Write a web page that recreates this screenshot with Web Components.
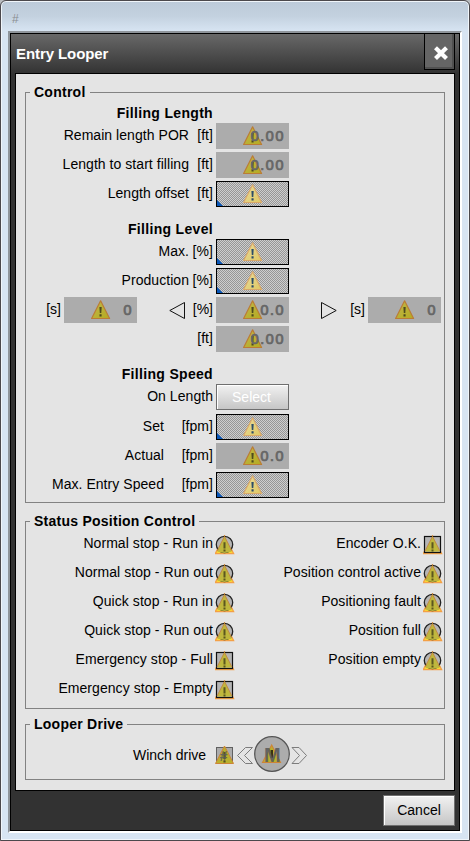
<!DOCTYPE html>
<html lang="en">
<head>
<meta charset="utf-8">
<title>Entry Looper</title>
<style>
html,body{margin:0;padding:0}
body{width:470px;height:841px;overflow:hidden;background:#b9bcc0;font:14px/20px "Liberation Sans",Arial,sans-serif;color:#000}
</style>
</head>
<body>
<looper-window></looper-window>
<script>
const define = (name, html) => customElements.define(name, class extends HTMLElement {
  constructor() {
    super();
    this.attachShadow({mode: 'open'});
  }
  connectedCallback() {
    this.shadowRoot.innerHTML = typeof html === 'function' ? html(this) : html;
  }
});

/* Triangular warning sign; tone = solid | pale */
define('warn-sign', el => {
  const pale = el.getAttribute('tone') === 'pale';
  return `<style>:host{display:block;width:20px;height:20px}svg{display:block}</style>
  <svg width="20" height="20" viewBox="0 0 20 20">
    <defs><linearGradient id="g" x1="0" y1="0" x2="1" y2="1">
      <stop offset="0" stop-color="${pale ? '#e8dca0' : '#c0b84c'}"/><stop offset="1" stop-color="${pale ? '#dfc862' : '#b5aa20'}"/></linearGradient></defs>
    <path d="M9.6 .8 18.6 18.5H.6Z" fill="url(#g)" stroke="${pale ? '#d9a869' : '#bb7c35'}" stroke-width="1.2" stroke-linejoin="round"/>
    <path d="M8.4 7h2.3l-.4 6.1H8.8ZM8.5 14.3h2.1v2.2H8.5Z" fill="${pale ? '#2c4d68' : '#4d4a1e'}"/>
  </svg>`;
});

/* Value box: read-only (flat grey) or editable (hatched, blue corner) */
define('value-field', el => {
  const edit = el.hasAttribute('editable');
  return `<style>
  :host{display:flex;flex:none;position:relative;box-sizing:border-box;width:73px;height:26px;align-items:center;justify-content:flex-end;padding:0 4.4px 1px 0;
    background:#acacac;color:#666;border:0;font:14px/24px "DejaVu Sans",sans-serif;letter-spacing:.8px;-webkit-text-stroke:.7px #666}
  :host([editable]){border:1px solid #000;background:conic-gradient(#cecece 25%,#969696 0 50%,#cecece 0 75%,#969696 0) 0 0/2px 2px}
  warn-sign{position:absolute;left:27px;top:3px}
  :host([editable]) warn-sign{left:26px;top:2px}
  .v{position:relative}
  .c{position:absolute;left:0;bottom:0;width:6px;height:6px;background:#0a57b8;clip-path:polygon(0 0,100% 100%,0 100%)}
  </style><warn-sign tone="${edit ? 'pale' : 'solid'}"></warn-sign>
  ${edit ? '<span class="c"></span>' : '<span class="v"><slot></slot></span>'}`;
});

/* One line of a form: label, unit and a value control */
define('form-row', el => `<style>
  :host{display:flex;height:26px;margin-bottom:3px;gap:3px}
  .l{width:187px;display:flex;justify-content:flex-end;line-height:24px;white-space:pre;letter-spacing:.05px}
  .u{text-align:right;width:${el.getAttribute('uw') || 24}px}
  </style><div class="l"><span>${el.getAttribute('label') || ''}</span>${el.hasAttribute('unit') ? `<span class="u">${el.getAttribute('unit')}</span>` : ''}</div><slot></slot>`);

define('form-heading', `<style>:host{display:block;height:20px;padding-top:9px;width:187px;text-align:right;font-weight:bold;letter-spacing:.32px;line-height:20px}</style><slot></slot>`);

/* Arrow outline, dir = left | right */
define('step-arrow', el => `<style>:host{display:block;width:16px;height:26px}svg{display:block}</style>
  <svg width="16" height="26" viewBox="0 0 16 26"><path d="${el.getAttribute('dir') === 'left' ? 'M15.5 5.5V21.5L.8 13.5Z' : 'M.5 5.5V21.5L15.2 13.5Z'}" fill="none" stroke="#111" stroke-width="1"/></svg>`);

define('level-row', `<style>
  :host{display:flex;height:26px;margin-bottom:3px;line-height:24px}
  span{text-align:right;margin-right:3px;flex:none}
  .a{width:35px}.b{width:28px}
  step-arrow{margin-left:32px}
  </style><span class="a">[s]</span><value-field>0</value-field><step-arrow dir="left"></step-arrow><span class="b">[%]</span><value-field>0.0</value-field><step-arrow dir="right"></step-arrow><span class="b">[s]</span><value-field>0</value-field>`);

/* Lamp with a warning overlay, shape = round | square */
define('status-lamp', el => {
  const sq = el.getAttribute('shape') === 'square';
  return `<style>:host{display:block;width:20px;height:20px}svg{display:block}</style>
  <svg width="20" height="20" viewBox="0 0 20 20">
    <path d="M9.5 .8 18.6 18.5H.4Z" fill="#ffe92c" stroke="#f3a047" stroke-width="1.3"/>
    ${sq ? '<rect x="1.5" y="1.5" width="16" height="16" fill="#b5b5b5" stroke="#111" stroke-width="1.2"/>' : '<circle cx="9.5" cy="9.5" r="8.2" fill="#b5b5b5" stroke="#222" stroke-width="1.3"/>'}
    <path d="M9.5 1.6 16.8 16.6 Q9.5 ${sq ? 16.8 : 19.2} 2.2 16.6Z" fill="#bfb73d"/>
    <path d="M2.1 16 9.5 1.4 16.9 16" fill="none" stroke="#c58a3c" stroke-width="1"/>
    <path d="M8.5 7.2h2v6.3h-2ZM8.5 14.4h2v2h-2Z" fill="#5b561f"/>
  </svg>`;
});

define('status-row', el => `<style>
  :host{display:flex;justify-content:flex-end;height:20px;margin-bottom:9px;gap:2px;line-height:16px}
  span{white-space:pre;letter-spacing:.06px}
  </style><span><slot></slot></span><status-lamp shape="${el.getAttribute('shape') || 'round'}"></status-lamp>`);

define('group-box', el => `<style>
  :host{display:block;position:relative;box-sizing:border-box;border:1px solid #828282}
  .t{position:absolute;left:4px;top:-11px;padding:0 4px 0 4px;background:#e4e4e4;font-weight:bold;letter-spacing:.25px;white-space:pre;line-height:20px}
  </style><span class="t">${el.getAttribute('caption')}</span><slot></slot>`);

define('push-button', `<style>
  :host{display:block;box-sizing:border-box;text-align:center;background:linear-gradient(#f1f1f1,#c6c6c6);border:1px solid #6f6f6f;box-shadow:inset 1px 1px #fff}
  </style><slot></slot>`);

define('winch-drive', `<style>
  :host{display:flex;align-items:flex-start;height:40px;padding:10px 0 0 107px}
  .l{width:82px;line-height:40px;white-space:pre}
  svg{display:block}
  text{font-family:"Liberation Sans",Arial,sans-serif;font-weight:bold}
  </style><span class="l">Winch drive</span>
  <svg width="92" height="38" viewBox="215 735 92 38">
    <rect x="216.5" y="747.5" width="16" height="16" fill="#acacac" stroke="#606060"/>
    <path d="M224.5 746 233.5 763.5H215.5Z" fill="#b9b02e" stroke="#ce8436" stroke-width="1"/>
    <path d="M223.4 752h2.2v7h-2.2ZM223.4 760.4h2.2v2h-2.2Z" fill="#58521c"/>
    <text x="219.6" y="760.5" font-size="14" font-style="italic" fill="#5c5c5c" opacity=".85">#</text>
    <g fill="none" stroke="#7c7c7c" stroke-width="1"><path d="M245.5 747.5 237.5 755.5 245.5 763.5H252.5L244.5 755.5 252.5 747.5Z"/><path d="M299 747.5 306.5 755.5 299 763.5H292L299.5 755.5 292 747.5Z"/></g>
    <circle cx="272" cy="754" r="17.3" fill="#acacac" stroke="#555" stroke-width="1.3"/>
    <path d="M271.7 745 280.5 762.5H262.5Z" fill="#b9b02e" stroke="#ce8436" stroke-width="1.1"/>
    <path d="M270.6 750h2.4v8h-2.4Z" fill="#373214"/>
    <text x="272.4" y="761.5" font-size="20" text-anchor="middle" fill="#5c5c5c" opacity=".9">M</text>
  </svg>`);

define('title-bar', `<style>
  :host{display:flex;justify-content:space-between;height:39px;box-sizing:border-box;padding-left:5px;padding-right:4px;color:#fff;font:bold 15px/39px "Liberation Sans",Arial,sans-serif;letter-spacing:-.08px}
  .x{box-sizing:border-box;width:31px;height:36px;border:1px solid #000;border-top:0;background:#656565;box-shadow:inset -2px -2px #505050}
  svg{display:block}
  </style><span><slot></slot></span><div class="x"><svg width="29" height="35" viewBox="425 34 29 35"><path d="M435.5 47.7 446.5 58.5M446.5 47.7 435.5 58.5" stroke="#fff" stroke-width="4.2"/></svg></div>`);

define('looper-window', `<style>
  :host{display:block;box-sizing:border-box;width:470px;height:841px;border:1px solid #4b484c;border-radius:6px 6px 0 0;
    background:linear-gradient(#bccad9,#c3d1df 15px,#d7e4f2 30px);box-shadow:inset 0 0 0 1px #f0f5fa;padding:0 7px 8px}
  .cap{height:30px;box-sizing:border-box;padding:8px 0 0 4px;font-size:12px;line-height:20px;color:#8b8e92}
  .frame{box-sizing:border-box;width:454px;height:802px;border:2px solid #8f959b;border-right-color:#fff;border-bottom-color:#fff}
  .dlg{box-sizing:border-box;height:798px;border:1px solid #000;background:linear-gradient(#686868,#323232 40px,#323232)}
  .page{box-sizing:border-box;margin:0 4px;height:718px;border:1px solid #000;background:#e4e4e4;padding:18px 9px 0}
  .foot{display:flex;justify-content:flex-end;padding:4px 4px 0 0}
  .foot push-button{width:72px;height:31px;line-height:29px}
  group-box.c{height:411px}
  group-box.s{height:188px;margin-top:18px}
  group-box.d{height:56px;margin-top:15px}
  .cols{display:flex;padding:13px 0 0 1px}
  .cols div{width:208px}
  form-row push-button{width:73px;height:26px;line-height:25px;color:#fff;padding-right:2px}
  </style>
  <div class="cap">#</div>
  <div class="frame"><div class="dlg">
    <title-bar>Entry Looper</title-bar>
    <div class="page">
      <group-box class="c" caption="Control">
        <form-heading style="padding-top:10px">Filling Length</form-heading>
        <form-row label="Remain length POR" unit="[ft]"><value-field>0.00</value-field></form-row>
        <form-row label="Length to start filling" unit="[ft]"><value-field>0.00</value-field></form-row>
        <form-row label="Length offset" unit="[ft]"><value-field editable></value-field></form-row>
        <form-heading>Filling Level</form-heading>
        <form-row label="Max." unit="[%]"><value-field editable></value-field></form-row>
        <form-row label="Production" unit="[%]"><value-field editable></value-field></form-row>
        <level-row></level-row>
        <form-row unit="[ft]"><value-field>0.00</value-field></form-row>
        <form-heading>Filling Speed</form-heading>
        <form-row label="On Length" style="margin-bottom:4px"><push-button>Select</push-button></form-row>
        <form-row label="Set" unit="[fpm]" uw="49"><value-field editable></value-field></form-row>
        <form-row label="Actual" unit="[fpm]" uw="49"><value-field>0.0</value-field></form-row>
        <form-row label="Max. Entry Speed" unit="[fpm]" uw="49"><value-field editable></value-field></form-row>
      </group-box>
      <group-box class="s" caption="Status Position Control">
        <div class="cols"><div>
          <status-row>Normal stop - Run in</status-row>
          <status-row>Normal stop - Run out</status-row>
          <status-row>Quick stop - Run in</status-row>
          <status-row>Quick stop - Run out</status-row>
          <status-row shape="square">Emergency stop - Full</status-row>
          <status-row shape="square">Emergency stop - Empty</status-row>
        </div><div>
          <status-row shape="square">Encoder O.K.</status-row>
          <status-row>Position control active</status-row>
          <status-row>Positioning fault</status-row>
          <status-row>Position full</status-row>
          <status-row>Position empty</status-row>
        </div></div>
      </group-box>
      <group-box class="d" caption="Looper Drive"><winch-drive></winch-drive></group-box>
    </div>
    <div class="foot"><push-button>Cancel</push-button></div>
  </div></div>`);
</script>
</body>
</html>
